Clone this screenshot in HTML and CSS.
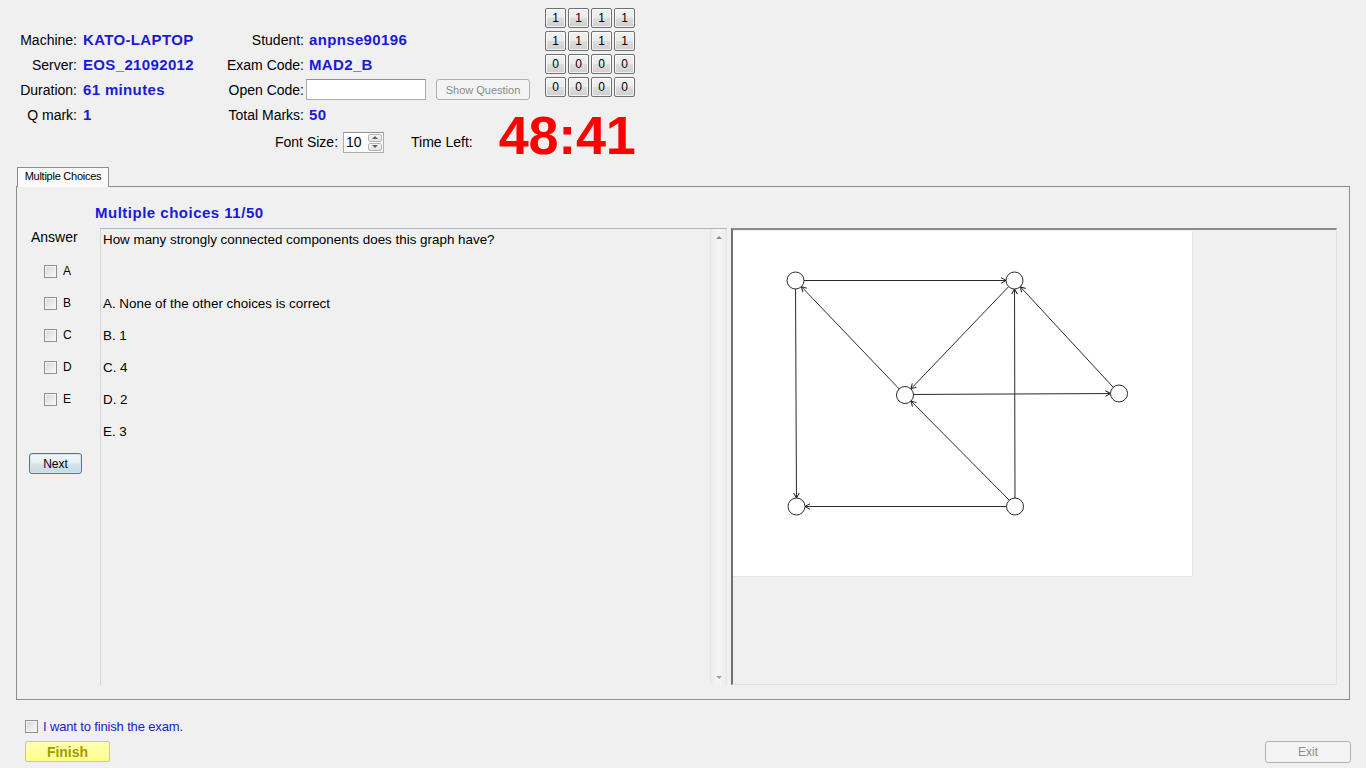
FILE: index.html
```html
<!DOCTYPE html>
<html>
<head>
<meta charset="utf-8">
<title>Exam Client</title>
<link rel="stylesheet" href="styles.css">
</head>
<body>
<div class="header">
  <div class="info">
    <div class="info-grid">
      <span class="lbl">Machine:</span><span class="val">KATO-LAPTOP</span>
      <span class="lbl">Student:</span><span class="val v2">anpnse90196</span>
      <span class="lbl">Server:</span><span class="val">EOS_21092012</span>
      <span class="lbl">Exam Code:</span><span class="val v2">MAD2_B</span>
      <span class="lbl">Duration:</span><span class="val">61 minutes</span>
      <span class="lbl">Open Code:</span>
      <span class="open-cell"><span class="textbox"></span><span class="btn disabled show-q">Show Question</span></span>
      <span class="lbl">Q mark:</span><span class="val">1</span>
      <span class="lbl">Total Marks:</span><span class="val v2">50</span>
    </div>
    <div class="font-row">
      <span class="lbl-plain">Font Size:</span>
      <span class="spin"><span class="spin-val">10</span><span class="spin-btns"><span class="spin-up"></span><span class="spin-down"></span></span></span>
      <span class="lbl-plain time-lbl">Time Left:</span>
      <span class="timer">48:41</span>
    </div>
  </div>
  <div class="btn-grid">
    <span class="btn gbtn">1</span><span class="btn gbtn">1</span><span class="btn gbtn">1</span><span class="btn gbtn">1</span>
    <span class="btn gbtn">1</span><span class="btn gbtn">1</span><span class="btn gbtn">1</span><span class="btn gbtn">1</span>
    <span class="btn gbtn">0</span><span class="btn gbtn">0</span><span class="btn gbtn">0</span><span class="btn gbtn">0</span>
    <span class="btn gbtn">0</span><span class="btn gbtn">0</span><span class="btn gbtn">0</span><span class="btn gbtn">0</span>
  </div>
</div>

<div class="main">
  <div class="tabbar"><span class="tab">Multiple Choices</span></div>
  <div class="panel">
    <div class="title">Multiple choices 11/50</div>
    <div class="answers">
      <div class="ans-head">Answer</div>
      <div class="ans-row"><span class="cb"></span><span>A</span></div>
      <div class="ans-row"><span class="cb"></span><span>B</span></div>
      <div class="ans-row"><span class="cb"></span><span>C</span></div>
      <div class="ans-row"><span class="cb"></span><span>D</span></div>
      <div class="ans-row"><span class="cb"></span><span>E</span></div>
      <span class="btn next-btn">Next</span>
    </div>
    <div class="qpane">
      <div class="qtext">
        <div class="question">How many strongly connected components does this graph have?</div>
        <div class="options">
          <div>A. None of the other choices is correct</div>
          <div>B. 1</div>
          <div>C. 4</div>
          <div>D. 2</div>
          <div>E. 3</div>
        </div>
      </div>
      <div class="vscroll"><span class="arr-up"></span><span class="arr-down"></span></div>
    </div>
    <div class="imgpane">
      <div class="picture">
        <svg width="459" height="345" viewBox="0 0 459 345">
          <defs>
            <marker id="ah" markerWidth="20" markerHeight="10" viewBox="-10 -5 20 10" refX="8.5" refY="0" orient="auto" markerUnits="userSpaceOnUse">
              <path d="M-5,-2.8 L0,0 L-5,2.8" fill="none" stroke="#222" stroke-width="1"/>
            </marker>
          </defs>
          <g stroke="#2a2a2a" stroke-width="1" marker-end="url(#ah)">
            <line x1="62.5" y1="49.5" x2="281.5" y2="49.5"/>
            <line x1="62.5" y1="49.5" x2="63.5" y2="275.5"/>
            <line x1="172" y1="164" x2="62.5" y2="49.5"/>
            <line x1="281.5" y1="49.5" x2="172" y2="164"/>
            <line x1="172" y1="163.5" x2="386" y2="162.5"/>
            <line x1="386" y1="162.5" x2="281.5" y2="49.5"/>
            <line x1="282" y1="275" x2="281.5" y2="49.5"/>
            <line x1="282" y1="275" x2="172" y2="164"/>
            <line x1="282" y1="275.5" x2="63.5" y2="275.5"/>
          </g>
          <g fill="#fff" stroke="#2a2a2a" stroke-width="1">
            <circle cx="62.5" cy="49.5" r="8.5"/>
            <circle cx="281.5" cy="49.5" r="8.5"/>
            <circle cx="172" cy="164" r="8.5"/>
            <circle cx="386" cy="162.5" r="8.5"/>
            <circle cx="63.5" cy="275.5" r="8.5"/>
            <circle cx="282" cy="275.5" r="8.5"/>
          </g>
        </svg>
      </div>
    </div>
  </div>
</div>

<div class="footer">
  <div class="finish-box">
    <div class="finish-check"><span class="cb"></span><span class="finish-lbl">I want to finish the exam.</span></div>
    <span class="btn finish-btn">Finish</span>
  </div>
  <span class="btn disabled exit-btn">Exit</span>
</div>
</body>
</html>
```

FILE: styles.css
```css
* { box-sizing: border-box; }

body {
  margin: 0;
  width: 1366px;
  height: 768px;
  overflow: hidden;
  background: #f0f0f0;
  font-family: "Liberation Sans", Arial, sans-serif;
  font-size: 14px;
  color: #000;
}

/* ---------- header ---------- */
.header {
  display: flex;
  height: 167px;
}

.info {
  width: 545px;
  flex: none;
}

.info-grid {
  margin-top: 27px;
  display: grid;
  grid-template-columns: 78px 145px 82px auto;
  grid-auto-rows: 25px;
  align-items: center;
}

.lbl {
  text-align: right;
  padding-right: 1px;
  white-space: nowrap;
}

.val {
  padding-left: 5px;
  font-weight: bold;
  font-size: 15px;
  letter-spacing: 0.35px;
  color: #1a1ad8;
  white-space: nowrap;
}

.val.v2 { padding-left: 4px; }

.open-cell {
  display: flex;
  align-items: center;
  padding-left: 1px;
}

.textbox {
  flex: none;
  width: 120px;
  height: 21px;
  background: #fff;
  border: 1px solid #abadb3;
  border-top-color: #8e9092;
}

.btn {
  display: inline-flex;
  align-items: center;
  justify-content: center;
  border: 1px solid #707070;
  border-radius: 3px;
  background: linear-gradient(#f2f2f2 0%, #ebebeb 48%, #dddddd 52%, #cfcfcf 100%);
  font-size: 12px;
  color: #000;
  box-shadow: inset 0 0 0 1px rgba(255,255,255,0.7);
}

.btn.disabled {
  border-color: #adb2b5;
  background: #f4f4f4;
  color: #8a8a8a;
  box-shadow: none;
}

.show-q {
  flex: none;
  width: 94px;
  height: 21px;
  margin-left: 10px;
  font-size: 11px;
}

.font-row {
  display: flex;
  align-items: center;
  height: 30px;
  padding-left: 275px;
}

.font-row > * { flex: none; }

.lbl-plain { white-space: nowrap; }

.spin {
  display: flex;
  width: 41px;
  height: 21px;
  margin-left: 5px;
  background: #fff;
  border: 1px solid #abadb3;
  border-top-color: #8e9092;
}

.spin-val {
  flex: 1;
  padding-left: 2px;
  line-height: 19px;
}

.spin-btns {
  width: 15px;
  display: flex;
  flex-direction: column;
  gap: 1px;
  padding: 1px 1px 1px 0;
}

.spin-up, .spin-down {
  flex: 1;
  border: 1px solid #b5b5b5;
  border-radius: 2px;
  background: linear-gradient(#f6f6f6, #e0e0e0);
  display: flex;
  align-items: center;
  justify-content: center;
}

.spin-up::after {
  content: "";
  border-left: 3px solid transparent;
  border-right: 3px solid transparent;
  border-bottom: 3px solid #606060;
}

.spin-down::after {
  content: "";
  border-left: 3px solid transparent;
  border-right: 3px solid transparent;
  border-top: 3px solid #606060;
}

.time-lbl { margin-left: 27px; }

.timer {
  margin-left: 26px;
  margin-top: -15px;
  font-size: 54px;
  font-weight: bold;
  line-height: 50px;
  color: #ff0000;
  letter-spacing: -0.3px;
}

.btn-grid {
  margin-top: 8px;
  display: grid;
  grid-template-columns: repeat(4, 21px);
  grid-auto-rows: 20px;
  column-gap: 2px;
  row-gap: 3px;
  align-content: start;
}

.gbtn {
  font-size: 12px;
  border-radius: 2px;
}

/* ---------- tab ---------- */
.main {
  margin: 0 16px;
}

.tabbar {
  display: flex;
  height: 19px;
  padding-left: 1px;
}

.tab {
  position: relative;
  z-index: 1;
  width: 92px;
  height: 20px;
  border: 1px solid #8d8d8d;
  border-bottom: none;
  background: #fbfbfb;
  font-size: 11px;
  letter-spacing: -0.25px;
  padding-top: 2px;
  text-align: center;
}

.panel {
  height: 514px;
  border: 1px solid #8d8d8d;
  display: grid;
  grid-template-columns: 83px 627px 610px;
  grid-template-rows: 41px 457px;
}

.title {
  grid-column: 1 / -1;
  padding-left: 78px;
  align-self: end;
  padding-bottom: 7px;
  line-height: 16px;
  font-size: 15px;
  letter-spacing: 0.5px;
  font-weight: bold;
  color: #1a1ad8;
}

.answers {
  padding-left: 14px;
}

.ans-head {
  line-height: 18px;
}

.ans-row {
  display: flex;
  align-items: center;
  height: 32px;
  padding-left: 13px;
  gap: 6px;
  font-size: 12px;
}

.ans-head + .ans-row { margin-top: 9px; }

.cb {
  display: inline-block;
  flex: none;
  width: 13px;
  height: 13px;
  border: 1px solid #8f8f8f;
  background: linear-gradient(135deg, #d6d6d6 0%, #e9e9e9 50%, #f7f7f7 100%);
  box-shadow: inset 0 0 0 1px #f4f4f4;
}

.next-btn {
  margin-top: 38px;
  margin-left: -2px;
  width: 53px;
  height: 21px;
  border-color: #3c7fb1;
  box-shadow: inset 0 0 0 1px #c6e6f7;
  background: linear-gradient(#f2f6f9 0%, #e6eef3 48%, #d8e2e9 52%, #cdd8e0 100%);
}

.qpane {
  display: flex;
  border-top: 1px solid #aab7c7;
  border-left: 1px solid #d5d5d5;
  background: #f0f0f0;
}

.qtext {
  flex: 1;
  padding-left: 2px;
  font-size: 13.4px;
}

.question {
  line-height: 22px;
}

.options {
  margin-top: 37px;
}

.options div {
  line-height: 32px;
}

.vscroll {
  width: 17px;
  display: flex;
  flex-direction: column;
  justify-content: space-between;
  align-items: center;
  padding: 7px 0 6px;
  border-left: 1px solid #e6e6e6;
  border-right: 1px solid #e6e6e6;
  background: linear-gradient(90deg, #ececec, #f4f4f4 40%, #f4f4f4 60%, #ececec);
}

.arr-up {
  width: 0;
  height: 0;
  border-left: 3px solid transparent;
  border-right: 3px solid transparent;
  border-bottom: 3px solid #8a8a8a;
}

.arr-down {
  width: 0;
  height: 0;
  border-left: 3px solid transparent;
  border-right: 3px solid transparent;
  border-top: 3px solid #a0a0a0;
}

.imgpane {
  margin-left: 4px;
  width: 606px;
  border-top: 2px solid #8c8c8c;
  border-left: 2px solid #707070;
  border-right: 1px solid #e2e2e2;
  border-bottom: 1px solid #e2e2e2;
  background: #f0f0f0;
}

.picture {
  margin-top: 1px;
  width: 460px;
  height: 346px;
  background: #fff;
  border-right: 1px solid #e6e6e6;
  border-bottom: 1px solid #e6e6e6;
}

.picture svg { display: block; }

/* ---------- footer ---------- */
.footer {
  display: flex;
  justify-content: space-between;
  align-items: flex-end;
  padding: 20px 15px 0 25px;
}

.finish-box {
  display: flex;
  flex-direction: column;
}

.finish-check {
  display: flex;
  align-items: center;
  gap: 5px;
  height: 13px;
}

.finish-lbl {
  font-size: 13px;
  letter-spacing: -0.15px;
  color: #2020c8;
}

.finish-btn {
  margin-top: 8px;
  width: 85px;
  height: 21px;
  border-color: #c4c4c4;
  border-radius: 2px;
  background: linear-gradient(#ffffb0, #ffff90);
  box-shadow: none;
  font-size: 14px;
  font-weight: bold;
  color: #9d9d00;
}

.exit-btn {
  width: 86px;
  height: 22px;
  margin-bottom: -1px;
}
```
